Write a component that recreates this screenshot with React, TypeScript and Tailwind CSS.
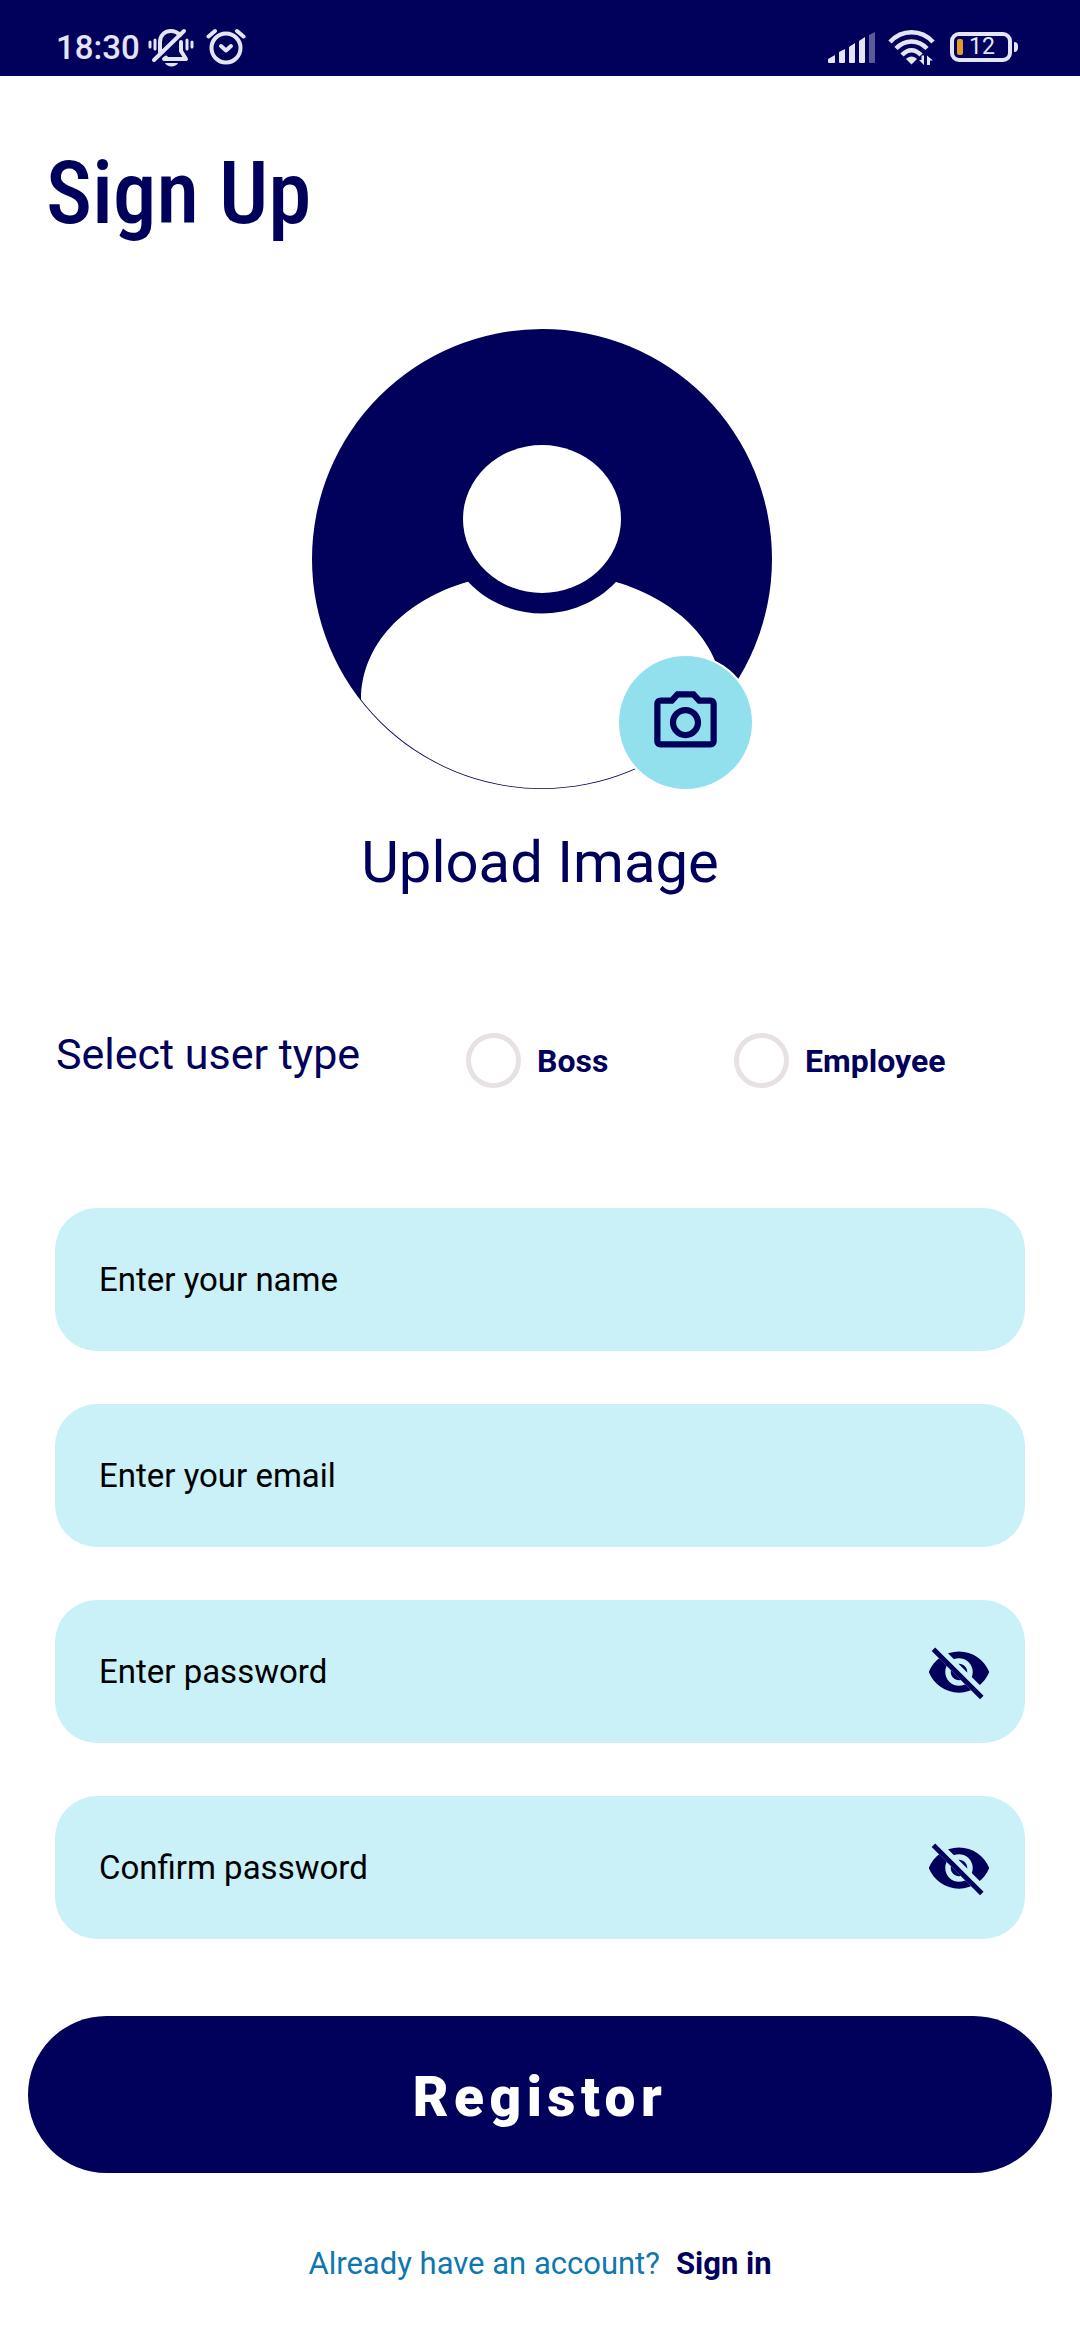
import { useId, useState } from "react";

function StatusBar() {
  return (
    <header className="flex h-[76px] items-end justify-between bg-[#01015c] pr-[62px] pb-2 pl-14 text-[#e4e4f4]">
      <div className="flex items-end">
        <span className="text-[33px] leading-10 font-medium">18:30</span>
        <svg className="ml-2 h-10 w-[46px]" viewBox="0 0 46 40" fill="none" stroke="currentColor" strokeLinecap="round" strokeLinejoin="round">
          <path d="M12 24V14C12 7 17 3 23 3C27 3 30 5 32 7" strokeWidth="4" />
          <path d="M6 32L36 3" strokeWidth="4" />
          <path d="M33 14V23L38 31H16L18 29.500" strokeWidth="4" />
          <path d="M2 14V19M7 12V21M39 12V21M44 14V19" strokeWidth="3" />
          <path d="M17 35H30C28 39.500 19 39.500 17 35Z" fill="currentColor" stroke="none" />
        </svg>
        <svg className="ml-3 h-10 w-10" viewBox="0 0 40 40" fill="none" stroke="currentColor" strokeLinecap="round" strokeLinejoin="round">
          <circle cx="20" cy="20" r="14.500" strokeWidth="4" />
          <path d="M15 18L20 22.500L25 18" strokeWidth="4" />
          <path d="M2.500 8.500L9 3M31 3L37.500 8.500" strokeWidth="4" />
        </svg>
      </div>
      <div className="flex items-end">
        <svg className="h-10 w-12" viewBox="0 0 48 40" fill="currentColor">
          <path d="M0 34V31L7 27V34Q7 35 6 35H1Q0 35 0 34Z" />
          <path d="M11 34V24L17 21V34Q17 35 16 35H12Q11 35 11 34Z" />
          <path d="M21 34V19L27 15V34Q27 35 26 35H22Q21 35 21 34Z" />
          <path d="M31 34V13L37 9V34Q37 35 36 35H32Q31 35 31 34Z" />
          <path d="M41 34V7L47 4V34Q47 35 46 35H42Q41 35 41 34Z" opacity="0.4" />
        </svg>
        <svg className="ml-3 h-10 w-12" viewBox="0 0 48 40" fill="none" stroke="currentColor">
          <path d="M2 14C14 1 33 1 45 14" strokeWidth="4.500" />
          <path d="M8 20.500C17 11 30 11 39 20.500" strokeWidth="4.500" />
          <path d="M14 27C20 20.500 27 20.500 33 27" strokeWidth="4.500" />
          <path d="M18 31C21 27.500 26 27.500 29 31L23.500 36.500Z" fill="currentColor" stroke="none" />
          <path d="M36 27.500V37L31 32H33.500V27.500ZM39 37V27.500L45 32.500H42V37Z" fill="currentColor" stroke="none" />
        </svg>
        <div className="ml-3.5 mb-1.5 flex items-center">
          <div className="flex h-[30px] w-[62px] items-center gap-1.5 rounded-[9px] border-4 border-current pl-[3px]">
            <span className="h-4 w-1.5 rounded-[2px] bg-[#e09a2d]" />
            <span className="text-[23px] leading-6">12</span>
          </div>
          <span className="ml-0.5 h-2.5 w-1 rounded-r-sm bg-current" />
        </div>
      </div>
    </header>
  );
}

function Avatar() {
  return (
    <div className="relative w-[460px]">
      <svg className="w-full" viewBox="0 0 460 460" aria-label="Profile picture" role="img">
        <defs>
          <clipPath id="avatar-inner">
            <circle cx="230" cy="230" r="229.200" />
          </clipPath>
        </defs>
        <circle cx="230" cy="230" r="230" fill="#01015c" />
        <path
          clipPath="url(#avatar-inner)"
          fill="#fff"
          d="M156 252.700C92 271 49 316 49 371V460H411V371C411 316 368 272 304 253C264 295 196 295 156 252.700Z"
        />
        <ellipse cx="230" cy="190" rx="79" ry="74" fill="#fff" />
      </svg>
      <button
        type="button"
        aria-label="Choose a photo"
        className="absolute right-5 bottom-0 flex size-[133px] items-center justify-center rounded-full bg-[#92e0ee] text-[#01015c] ring-2 ring-white"
      >
        <svg className="size-[75px]" viewBox="0 0 24 24" fill="currentColor">
          <path d="M14.12 4l1.83 2H20v12H4V6h4.05l1.83-2h4.24M15 2H9L7.17 4H4c-1.100 0-2 .9-2 2v12c0 1.100.9 2 2 2h16c1.100 0 2-.9 2-2V6c0-1.100-.9-2-2-2h-3.170L15 2zm-3 7c1.650 0 3 1.350 3 3s-1.350 3-3 3-3-1.350-3-3 1.350-3 3-3m0-2c-2.760 0-5 2.240-5 5s2.240 5 5 5 5-2.240 5-5-2.240-5-5-5z" />
        </svg>
      </button>
    </div>
  );
}

function UserTypeOption({ label, value }: { label: string; value: string }) {
  return (
    <label className="flex w-[268px] items-center gap-4 text-[32px] leading-10 font-bold">
      <input
        type="radio"
        name="user-type"
        value={value}
        className="size-[55px] shrink-0 appearance-none rounded-full border-[5px] border-[#e7e1e5] checked:border-[#01015c]"
      />
      {label}
    </label>
  );
}

function EyeOff() {
  const clip = useId();
  return (
    <svg className="size-[66px]" viewBox="0 0 24 24" fill="currentColor">
      <defs>
        <clipPath id={clip}>
          <path d="M2 4.270L19.730 22L22.270 19.460L4.540 1.730V1H23V23H1V4.270Z" />
        </clipPath>
      </defs>
      <path
        clipPath={`url(#${clip})`}
        d="M12 4.500C7 4.500 2.730 7.610 1 12c1.730 4.390 6 7.500 11 7.500s9.270-3.110 11-7.500c-1.730-4.390-6-7.500-11-7.500zM12 17c-2.760 0-5-2.240-5-5s2.240-5 5-5 5 2.240 5 5-2.240 5-5 5zM12 9c-1.660 0-3 1.340-3 3s1.340 3 3 3 3-1.340 3-3-1.340-3-3-3z"
      />
      <path d="M2.700 3.700L20.300 21.300" fill="none" stroke="currentColor" strokeWidth="1.800" />
    </svg>
  );
}

function Field({ label, type }: { label: string; type: "text" | "email" | "password" }) {
  const [shown, setShown] = useState(false);
  const secret = type === "password";
  return (
    <div className="flex h-[143px] items-center rounded-[42px] bg-[#caf0f8] pr-[33px] pl-11">
      <input
        type={secret && shown ? "text" : type}
        aria-label={label}
        placeholder={label}
        className="h-full min-w-0 flex-1 bg-transparent text-[33px] text-black outline-none placeholder:text-black"
      />
      {secret && (
        <button type="button" aria-label="Toggle password visibility" onClick={() => setShown(!shown)}>
          <EyeOff />
        </button>
      )}
    </div>
  );
}

export default function App() {
  return (
    <div className="min-h-screen bg-white font-['Roboto',sans-serif] text-[#01015c]">
      <StatusBar />
      <main>
        <h1 className="mt-[67px] pl-[46px] font-['Roboto_Condensed','Roboto',sans-serif] text-[87px] leading-[100px] font-medium">Sign Up</h1>
        <section className="mt-[86px] flex flex-col items-center">
          <div className="pl-1">
            <Avatar />
          </div>
          <h2 className="mt-[37px] text-[58px] leading-[72px]">Upload Image</h2>
        </section>
        <form onSubmit={(e) => e.preventDefault()}>
          <fieldset className="mt-[135px] flex items-center pl-14">
            <legend className="float-left w-[410px] pb-[13px] text-[43px] leading-[42px]">Select user type</legend>
            <UserTypeOption label="Boss" value="boss" />
            <UserTypeOption label="Employee" value="employee" />
          </fieldset>
          <div className="mt-[120px] flex flex-col gap-[53px] px-[55px]">
            <Field label="Enter your name" type="text" />
            <Field label="Enter your email" type="email" />
            <Field label="Enter password" type="password" />
            <Field label="Confirm password" type="password" />
          </div>
          <div className="mt-[77px] px-7">
            <button type="submit" className="h-[157px] w-full rounded-full bg-[#01015c] pt-1.5 text-[55px] font-black tracking-widest text-white">
              Registor
            </button>
          </div>
        </form>
        <p className="mt-[71px] text-center text-[31px] leading-10 text-[#0f77b0]">
          Already have an account?
          <a href="#sign-in" className="ml-4 font-bold text-[#01015c]">Sign in</a>
        </p>
      </main>
    </div>
  );
}
